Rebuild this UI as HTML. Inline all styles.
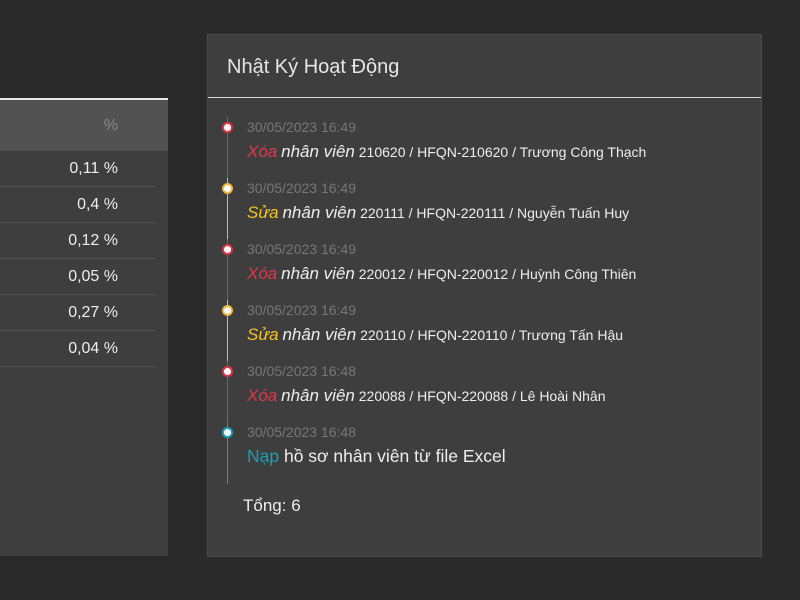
<!DOCTYPE html><html><head><meta charset="utf-8"><style>
body{margin:0;width:800px;height:600px;background:#2a2a2a;font-family:"Liberation Sans",sans-serif;position:relative;overflow:hidden}
.l{position:absolute;left:0;top:98px;width:168px;height:458px;background:#3e3e3e;border-top:2px solid #e8e8e8;box-sizing:border-box}
.lh{height:51px;background:#525252;color:#8a8a8a;font-size:16px;text-align:right;padding-right:50px;line-height:51px}
.row{height:36px;line-height:36px;color:#eee;font-size:16px;text-align:right;border-bottom:1px solid #555;width:155px;box-sizing:border-box;padding-right:37px}
.r{position:absolute;left:207px;top:34px;width:555px;height:523px;background:#3e3e3e;border:1px solid #4a4a4a;box-sizing:border-box}
.t{height:62px;border-bottom:1px solid #ddd;color:#e6e6e6;font-size:20px;line-height:64px;padding-left:19px}
.it{position:absolute;left:19px;width:520px}
.ln{position:absolute;left:19px;width:1px;z-index:0}
.dot{position:absolute;left:-5px;top:-5px;width:7px;height:7px;border-radius:50%;background:#fff;border:2px solid;z-index:2}
.d{position:absolute;left:20px;top:-8px;color:#777;font-size:14px;white-space:nowrap}
.a{position:absolute;left:20px;top:15px;color:#eee;font-size:14px;white-space:nowrap}
.a i{font-size:17px}
</style></head><body>
<div class="l"><div class="lh">%</div>
<div class="row">0,11 %</div><div class="row">0,4 %</div><div class="row">0,12 %</div><div class="row">0,05 %</div><div class="row">0,27 %</div><div class="row">0,04 %</div></div>
<div class="r"><div class="t">Nhật Ký Hoạt Động</div>
<div class="ln" style="top:82px;height:61px;background:#dc3545"></div>
<div class="ln" style="top:143px;height:61px;background:#f0b43a"></div>
<div class="ln" style="top:204px;height:61px;background:#dc3545"></div>
<div class="ln" style="top:265px;height:61px;background:#f0b43a"></div>
<div class="ln" style="top:326px;height:61px;background:#dc3545"></div>
<div class="ln" style="top:387px;height:62px;background:#17a2b8"></div>
<div class="it" style="top:92px"><div class="dot" style="border-color:#dc3545"></div><div class="d">30/05/2023 16:49</div><div class="a"><i style="color:#e0394a">Xóa</i> <i>nhân viên</i> 210620 / HFQN-210620 / Trương Công Thạch</div></div>
<div class="it" style="top:153px"><div class="dot" style="border-color:#f0b43a"></div><div class="d">30/05/2023 16:49</div><div class="a"><i style="color:#f7c51e">Sửa</i> <i>nhân viên</i> 220111 / HFQN-220111 / Nguyễn Tuấn Huy</div></div>
<div class="it" style="top:214px"><div class="dot" style="border-color:#dc3545"></div><div class="d">30/05/2023 16:49</div><div class="a"><i style="color:#e0394a">Xóa</i> <i>nhân viên</i> 220012 / HFQN-220012 / Huỳnh Công Thiên</div></div>
<div class="it" style="top:275px"><div class="dot" style="border-color:#f0b43a"></div><div class="d">30/05/2023 16:49</div><div class="a"><i style="color:#f7c51e">Sửa</i> <i>nhân viên</i> 220110 / HFQN-220110 / Trương Tấn Hậu</div></div>
<div class="it" style="top:336px"><div class="dot" style="border-color:#dc3545"></div><div class="d">30/05/2023 16:48</div><div class="a"><i style="color:#e0394a">Xóa</i> <i>nhân viên</i> 220088 / HFQN-220088 / Lê Hoài Nhân</div></div>
<div class="it" style="top:397px"><div class="dot" style="border-color:#17a2b8"></div><div class="d">30/05/2023 16:48</div><div class="a" style="font-size:17.5px;top:14px"><span style="color:#17a2b8">Nạp</span> hồ sơ nhân viên từ file Excel</div></div>
<div style="position:absolute;left:35px;top:461px;color:#eee;font-size:17px">Tổng: 6</div>
</div>
</body></html>
